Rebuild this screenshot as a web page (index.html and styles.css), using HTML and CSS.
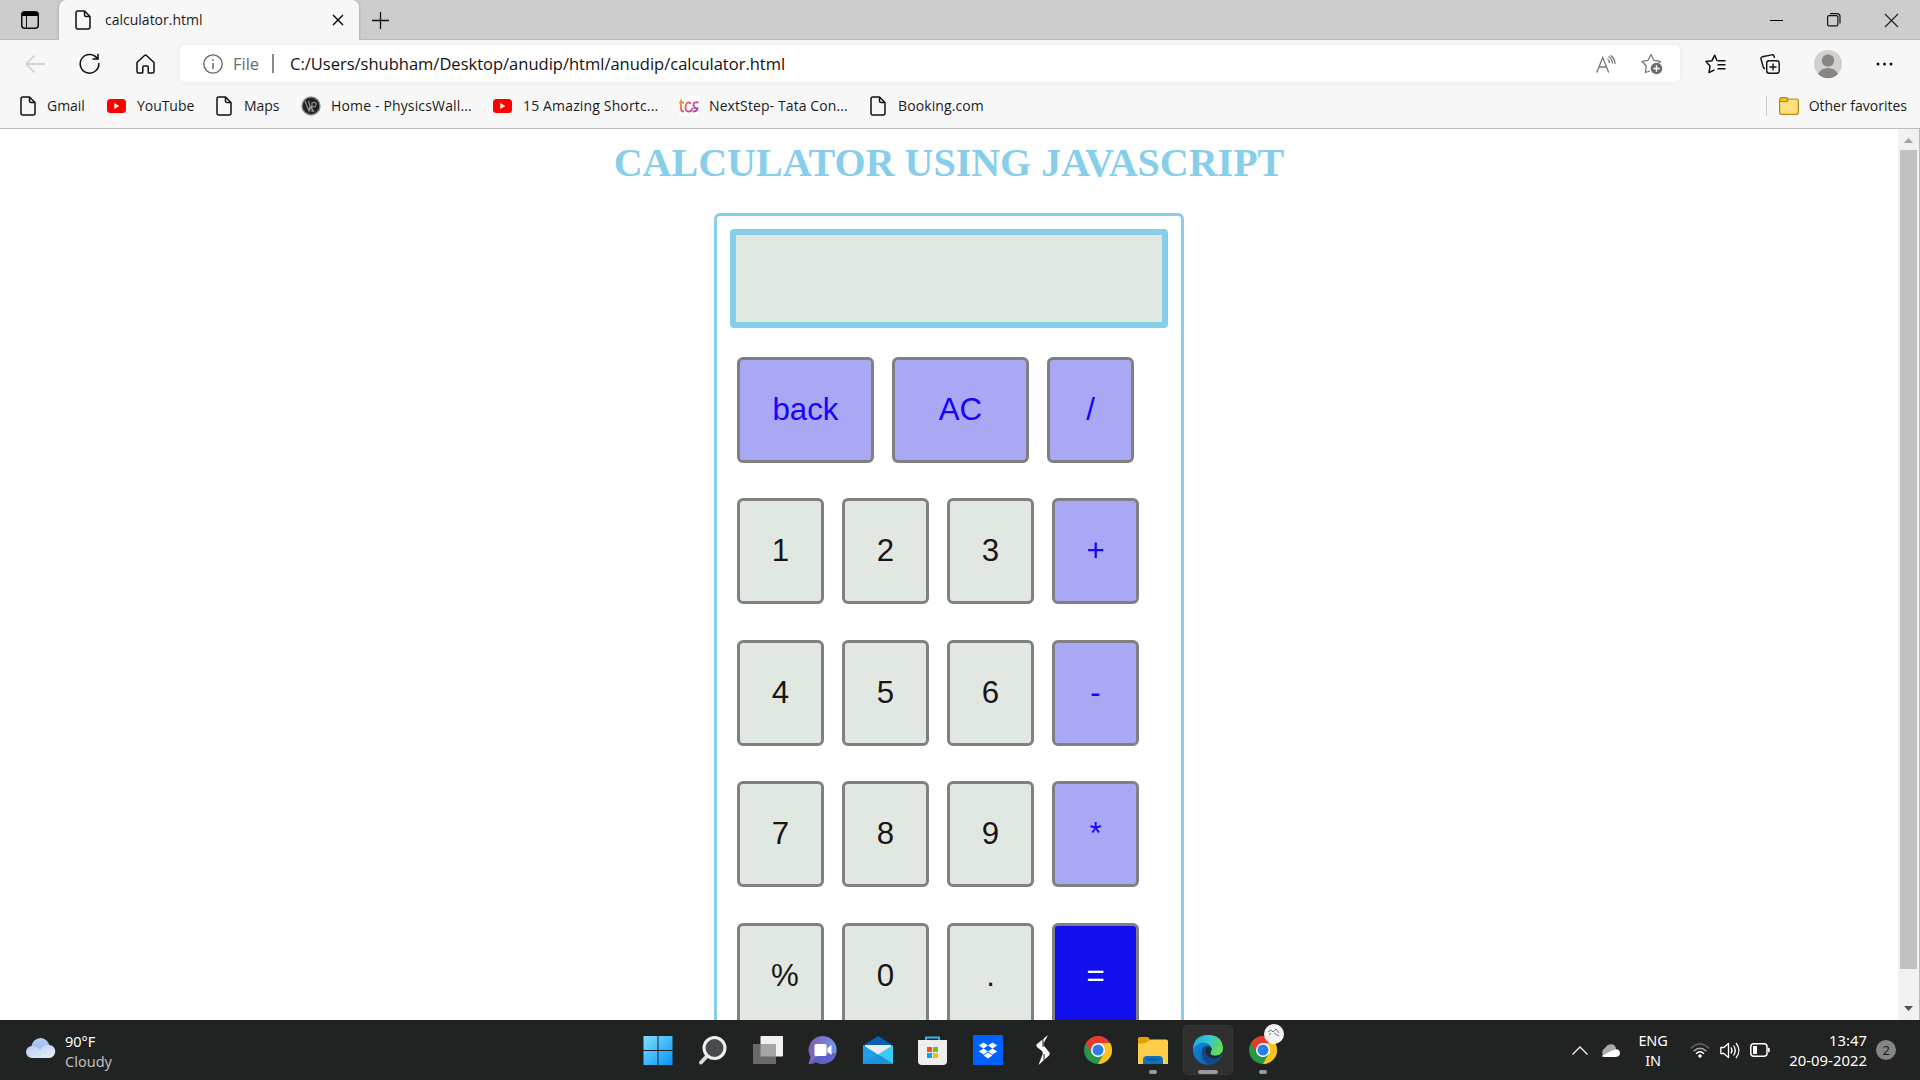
FILE: index.html
```html
<!DOCTYPE html>
<html lang="en">
<head>
<meta charset="utf-8">
<title>calculator.html</title>
<link rel="stylesheet" href="styles.css">
</head>
<body>
<svg class="defs" width="0" height="0" aria-hidden="true">
  <defs>
    <symbol id="page" viewBox="0 0 16 20"><path d="M3 1h6.500L15 6.500V17q0 2-2 2H3q-2 0-2-2V3q0-2 2-2zM9.500 1v4q0 1.500 1.500 1.500h4" fill="none" stroke="#111" stroke-width="1.500" stroke-linejoin="round"/></symbol>
    <symbol id="youtube" viewBox="0 0 19 14"><rect width="19" height="14" rx="3.500" fill="#f00"/><path d="M7.300 4v6l5-3z" fill="#fff"/></symbol>
    <symbol id="chrome" viewBox="0 0 28 28">
      <path d="M14 14L1.900 7A14 14 0 0 1 26.100 7z" fill="#e33b2e"/>
      <path d="M14 14L26.100 7A14 14 0 0 1 14 28z" fill="#fcc31e"/>
      <path d="M14 14L14 28A14 14 0 0 1 1.900 7z" fill="#269847"/>
      <path d="M14 7h12.100A14 14 0 0 1 14 28l6-10.500z" fill="#fcc31e"/>
      <path d="M8 17.500L1.900 7l6 3zM14 28l6-10.500-6 3z" fill="#269847"/>
      <path d="M14 7h12.100A14 14 0 0 0 1.900 7L8 17z" fill="#e33b2e"/>
      <circle cx="14" cy="14" r="7" fill="#fff"/><circle cx="14" cy="14" r="5.500" fill="#2d7de9"/>
    </symbol>
  </defs>
</svg>
<div class="screen">
  <header class="tabstrip">
    <svg class="tab-menu" width="18" height="18" viewBox="0 0 18 18"><rect x=".75" y=".75" width="16.500" height="16.500" rx="3" fill="none" stroke="#111" stroke-width="1.500"/><path d="M1 5V3q0-2 2-2h12q2 0 2 2v2z"/><path d="M5.500 5v12" stroke="#111"/></svg>
    <div class="tab">
      <svg width="16" height="20"><use href="#page"/></svg>
      <span class="tab-title">calculator.html</span>
      <svg class="tab-close" width="10" height="10" viewBox="0 0 10 10"><path d="M0 0l10 10M10 0L0 10" stroke="#111" stroke-width="1.500"/></svg>
    </div>
    <svg class="new-tab" width="17" height="17" viewBox="0 0 17 17"><path d="M8.500 0v17M0 8.500h17" stroke="#111" stroke-width="1.300"/></svg>
    <div class="window-controls">
      <svg width="13" height="13" viewBox="0 0 13 13"><path d="M0 6.500h13" stroke="#000"/></svg>
      <svg width="14" height="14" viewBox="0 0 14 14" fill="none" stroke="#111" stroke-width="1.200"><rect x=".6" y="2.600" width="10.300" height="10.300" rx="1.500"/><path d="M3 .6h7q3 0 3 3v7"/></svg>
      <svg width="13" height="13" viewBox="0 0 13 13"><path d="M0 0l13 13M13 0L0 13" stroke="#222" stroke-width="1.200"/></svg>
    </div>
  </header>
  <nav class="toolbar">
    <svg class="nav-back" width="20" height="18" viewBox="0 0 20 18" fill="none" stroke="#ccc" stroke-width="1.300"><path d="M20 9H1M9.500 .5L1 9l8.500 8.500"/></svg>
    <svg class="nav-reload" width="21" height="21" viewBox="0 0 21 21" fill="none" stroke="#111" stroke-width="1.500"><path d="M18.500 6A9.300 9.300 0 1 0 19.800 10M19 .8V6h-5.500"/></svg>
    <svg class="nav-home" width="19" height="20" viewBox="0 0 19 20" fill="none" stroke="#111" stroke-width="1.500" stroke-linejoin="round"><path d="M1 8.500L8.500 1.500q1-.8 2 0L18 8.500V17.500q0 1.500-1.500 1.500H13q-.8 0-.8-.8V13q0-1-1-1H7.800q-1 0-1 1v5.200q0 .8-.8.800H2.500Q1 19 1 17.500z"/></svg>
    <div class="address">
      <svg width="20" height="20" viewBox="0 0 20 20" fill="none" stroke="#666" stroke-width="1.300"><circle cx="10" cy="10" r="9.200"/><path d="M10 9v6M10 5.300v1.700" stroke-width="1.500"/></svg>
      <span class="scheme">File</span>
      <span class="divider"></span>
      <span class="url">C:/Users/shubham/Desktop/anudip/html/anudip/calculator.html</span>
      <svg class="read-aloud" width="20" height="18" viewBox="0 0 20 18" fill="none" stroke="#777" stroke-width="1.300"><path d="M.8 17.500L6.700 2.500l6 15M3 12h7.500M11.500 4q2 1.500 2 4M12.500 1.500q4 2.500 4 7M14.500 .4Q19 3.500 19 9"/></svg>
      <svg class="add-favorite" width="22" height="22" viewBox="0 0 22 22"><path d="M9 18l-4.500 1.500 .7-6.500L1 8.300l6-1L10 1.500l2.800 5.800 6.700 1-2 2" fill="none" stroke="#777" stroke-width="1.300" stroke-linejoin="round"/><circle cx="15.500" cy="15.500" r="5.800" fill="#6d6d6d"/><path d="M15.500 12.300v6.400M12.300 15.500h6.400" stroke="#fff" stroke-width="1.400"/></svg>
    </div>
    <div class="toolbar-actions">
      <svg width="21" height="20" viewBox="0 0 21 20" fill="none" stroke="#111" stroke-width="1.500" stroke-linejoin="round"><path d="M12 6.700L9.700 1.200 7 6.700 1 7.500l4 4.500-1 6.500 5.500-2.700M12.500 6.800H20.500M12.500 10.800h8M12.500 14.800h8"/></svg>
      <svg width="20" height="20" viewBox="0 0 20 20" fill="none" stroke="#111" stroke-width="1.400"><rect x="6.700" y="6.700" width="12.500" height="12.500" rx="2.500"/><path d="M13 9.500v7M9.500 13h7M14.500 4l-.5-1.800q-.5-1.800-2.300-1.300L2.300 2.800Q.5 3.300 1 5l2.200 8q.4 1.500 1.800 1.800"/></svg>
      <svg width="28" height="28" viewBox="0 0 28 28"><circle cx="14" cy="14" r="14" fill="#d2d0ce"/><circle cx="14" cy="10.500" r="6.200" fill="#8a8583"/><path d="M4 24q3-6 10-6t10 6a14 14 0 0 1-20 0" fill="#8a8583"/></svg>
      <svg width="17" height="4" viewBox="0 0 17 4" fill="#111"><circle cx="2" cy="2" r="1.500"/><circle cx="8.500" cy="2" r="1.500"/><circle cx="15" cy="2" r="1.500"/></svg>
    </div>
  </nav>
  <nav class="bookmarks">
    <a class="bookmark gmail"><svg width="16" height="20"><use href="#page"/></svg><span>Gmail</span></a>
    <a class="bookmark youtube"><svg width="19" height="14"><use href="#youtube"/></svg><span>YouTube</span></a>
    <a class="bookmark maps"><svg width="16" height="20"><use href="#page"/></svg><span>Maps</span></a>
    <a class="bookmark physics"><svg width="20" height="20" viewBox="0 0 20 20"><circle cx="10" cy="10" r="9.700" fill="#8c8c8c"/><circle cx="10" cy="10" r="8.300" fill="#222"/><path d="M4 5l4 10 1-5-1.500-5M11 16V7q4-2 4 1.500t-4 2M8 15l2-4 3 5" fill="none" stroke="#999" stroke-width="1.100"/></svg><span>Home - PhysicsWall...</span></a>
    <a class="bookmark shortcuts"><svg width="19" height="14"><use href="#youtube"/></svg><span>15 Amazing Shortc...</span></a>
    <a class="bookmark tcs"><svg width="20" height="20" viewBox="0 0 20 20"><defs><linearGradient id="tcs-fill" gradientUnits="userSpaceOnUse" x1="2" y1="3" x2="18" y2="17"><stop stop-color="#f7a12b"/><stop offset=".5" stop-color="#e0447a"/><stop offset="1" stop-color="#8a4fb5"/></linearGradient></defs><path d="M0 0h20v20H0z" fill="#fff"/><path d="M2 3.500V13q0 2.500 3 2.500M0 6.500h5M12 7.500Q7.500 4.500 6.500 10.500t5 4.800L14 12M19.500 6.500Q14 5.500 14.500 9t4 3.500q0 3-5 3" fill="none" stroke="url(#tcs-fill)" stroke-width="1.800"/></svg><span>NextStep- Tata Con...</span></a>
    <a class="bookmark booking"><svg width="16" height="20"><use href="#page"/></svg><span>Booking.com</span></a>
    <div class="other-favorites">
      <svg width="20" height="18" viewBox="0 0 20 18" stroke="#b8890e" stroke-width="1.200"><path d="M.6 4V15q0 2.400 2.400 2.400h14q2.400 0 2.400-2.400V4.500Q19.400 2 17 2H8z" fill="#ffdf7e"/><path d="M.6 4.500V3Q.6 .6 3 .6h4q2 0 2 2t-2 2z" fill="#f5c518"/></svg>
      <span>Other favorites</span>
    </div>
  </nav>
  <div class="viewport">
    <main class="document">
      <h1>CALCULATOR USING JAVASCRIPT</h1>
      <section class="calculator">
        <div class="display"></div>
        <div class="keypad">
          <div class="key-row"><button class="key op wide">back</button><button class="key op wide">AC</button><button class="key op">/</button></div>
          <div class="key-row"><button class="key">1</button><button class="key">2</button><button class="key">3</button><button class="key op">+</button></div>
          <div class="key-row"><button class="key">4</button><button class="key">5</button><button class="key">6</button><button class="key op">-</button></div>
          <div class="key-row"><button class="key">7</button><button class="key">8</button><button class="key">9</button><button class="key op">*</button></div>
          <div class="key-row"><button class="key percent">%</button><button class="key">0</button><button class="key">.</button><button class="key equals">=</button></div>
        </div>
      </section>
    </main>
    <div class="scrollbar">
      <svg width="9" height="5" viewBox="0 0 9 5"><path d="M4.500 0L9 5H0z" fill="#a3a3a3"/></svg>
      <div class="thumb"></div>
      <svg width="9" height="5" viewBox="0 0 9 5"><path d="M0 0h9L4.500 5z" fill="#505050"/></svg>
    </div>
  </div>
  <footer class="taskbar">
    <div class="weather">
      <svg width="30" height="20" viewBox="0 0 30 20"><defs><linearGradient id="cloud-back" x2="0" y2="1"><stop stop-color="#b5ccf5"/><stop offset="1" stop-color="#8fb1ea"/></linearGradient><linearGradient id="cloud-front" x2="1" y2="1"><stop stop-color="#b4ccef"/><stop offset="1" stop-color="#e9eff8"/></linearGradient></defs><circle cx="14.500" cy="9" r="9" fill="url(#cloud-back)"/><path d="M6 20a6 6 0 0 1 0-12q5 0 8 4 3-5 8-5a6.500 6.500 0 0 1 1.500 13z" fill="url(#cloud-front)"/></svg>
      <div class="weather-text"><span>90°F</span><span class="condition">Cloudy</span></div>
    </div>
    <div class="apps">
      <div class="app"><svg width="30" height="30" viewBox="0 0 30 30"><defs><linearGradient id="win" x2="1" y2="1"><stop stop-color="#7fe0ff"/><stop offset="1" stop-color="#0793fb"/></linearGradient></defs><path d="M1.500 1h14v14h-14zM16.500 1h14v14h-14zM1.500 16h14v14h-14zM16.500 16h14v14h-14z" transform="translate(-1 0)" fill="url(#win)"/></svg></div>
      <div class="app"><svg width="30" height="30" viewBox="0 0 30 30"><path d="M10 20l-7 7.500" stroke="#d7dadb" stroke-width="4" stroke-linecap="round"/><circle cx="16.500" cy="13" r="10.500" fill="#484a4b" stroke="#eef0f1" stroke-width="3"/></svg></div>
      <div class="app"><svg width="30" height="30" viewBox="0 0 30 30"><rect x="7.500" y="1" width="22.500" height="20.500" rx="1" fill="#f1f1f1"/><rect x="0" y="9" width="23" height="20" rx="1" fill="#6a6a6a"/><path d="M7.500 9H23v12.500H7.500z" fill="#a5a5a5"/></svg></div>
      <div class="app"><svg width="30" height="30" viewBox="0 0 30 30"><defs><linearGradient id="chat" x1="0" y1="0" x2="1" y2=".2"><stop stop-color="#8556ad"/><stop offset="1" stop-color="#7197e6"/></linearGradient></defs><path d="M15 1A14 14 0 1 1 8 27.300Q5 29.500 .5 29L2.500 22A14 14 0 0 1 15 1z" fill="url(#chat)"/><path d="M4 26q9-9 24-8-3 11-15 11l-6-2q-3 2-6 2z" fill="#5558c9" opacity=".75"/><rect x="6.500" y="9" width="12" height="12" rx="1.500" fill="#fff"/><path d="M19.500 13l4-3v10l-4-3z" fill="#fff"/></svg></div>
      <div class="app"><svg width="30" height="30" viewBox="0 0 30 30"><path d="M0 10.500L15 1l15 9.500V24H0z" fill="#0860b5"/><path d="M2 10h26v9L15 21 2 16z" fill="#eceeef"/><path d="M0 10l30 19H0z" fill="#219de5"/><path d="M30 10v19L15 19.500z" fill="#38cdf7"/><path d="M15 19.500L30 29H0z" fill="#1b92e0"/></svg></div>
      <div class="app"><svg width="30" height="30" viewBox="0 0 30 30"><path d="M8 7V2.500h13V7" fill="none" stroke="#22bdf2" stroke-width="2"/><path d="M0 5h29v21q0 4-4 4H4q-4 0-4-4z" fill="#eee"/><path d="M9 12h5v5H9z" fill="#f1511b"/><path d="M15 12h5v5h-5z" fill="#80bc06"/><path d="M9 18h5v5H9z" fill="#00a5ef"/><path d="M15 18h5v5h-5z" fill="#fbbc09"/></svg></div>
      <div class="app"><svg width="30" height="30" viewBox="0 0 30 30"><path d="M0 0h30v30H0z" fill="#0061fe"/><path d="M10.500 7.500l4.500 3-4.500 3-4.700-3zM19.500 7.500l4.700 3-4.700 3-4.500-3zM10.500 13.500l4.500 3-4.500 3-4.700-3zM19.500 13.500l4.700 3-4.700 3-4.500-3zM15 17.500l4.500 3-4.500 3-4.500-3z" fill="#fff"/></svg></div>
      <div class="app"><svg width="30" height="30" viewBox="0 0 30 30"><path d="M20 0l-4.500 8.500q-.5 2 1 3l5 6q1 2-1 3.500L10.500 30l4-10.500q1-2-.5-3.500l-5-4q-1.500-2 0-3z" fill="#fff"/><path d="M15 3v9M16 19v7" fill="none" stroke="#212222"/></svg></div>
      <div class="app"><svg width="28" height="28"><use href="#chrome"/></svg></div>
      <div class="app running"><svg width="30" height="30" viewBox="0 0 30 30"><path d="M0 4q0-2 2-2h8l3 3.500V10H0z" fill="#dfa000"/><path d="M0 8.500q6 .5 9-1.500l4-2.500h15q2 0 2 2V29H0z" fill="#ffcd48"/><path d="M5 29v-4q0-4 4-4h12q4 0 4 4v4z" fill="#0f70bd"/><path d="M9 24.500h12" stroke="#084c87" stroke-width="1.300"/></svg></div>
      <div class="app running active"><svg width="30" height="30" viewBox="0 0 30 30"><defs><linearGradient id="edge-top" x2="1" y2=".3"><stop stop-color="#20a4dd"/><stop offset=".5" stop-color="#31c5d7"/><stop offset="1" stop-color="#62dc59"/></linearGradient><linearGradient id="edge-low" x2=".8" y2="1"><stop stop-color="#158fe0"/><stop offset="1" stop-color="#0c5da8"/></linearGradient></defs><circle cx="15" cy="15" r="15" fill="url(#edge-low)"/><path d="M0 14Q1 0 15 0t15 13q0 7.500-8 7.500-6 0-4.500-3.500Q20 10 13 8T0 14z" fill="url(#edge-top)"/><path d="M9 14q3-5 8-2.500 3 2 .5 6-1 3 4.500 4 4 0 7-1.500-4 9-13 10Q7 25 9 14z" fill="#114a8b"/><path d="M18.500 13q-1.500-2-4-1-3 2-2 6 1.500 4 8 5.500 5 0 8.500-3.500l1-4q-3 5-8 5-6-1-4.500-4 1.500-2 1-4z" fill="#202a30"/></svg></div>
      <div class="app running"><svg width="28" height="28"><use href="#chrome"/></svg><svg class="profile-badge" width="20" height="20" viewBox="0 0 20 20"><circle cx="10" cy="10" r="10" fill="#f4f4f4"/><path d="M4 8l3-2 2 2 3-3 3 4M5 11l2-2M10 9l5 3" fill="none" stroke="#777"/></svg></div>
    </div>
    <div class="tray">
      <svg class="chevron" width="16" height="9" viewBox="0 0 16 9"><path d="M.5 8.500L8 1l7.500 7.500" fill="none" stroke="#eee" stroke-width="1.400"/></svg>
      <svg class="onedrive" width="20" height="13" viewBox="0 0 20 13"><path d="M5 13a5 5 0 0 1 0-9Q8-1 13 .5q3 1.500 3 4.500a4 4 0 0 1 0 8z" fill="#aaa"/><path d="M1.500 12L11 7l7 4q-1 2-3 2H5q-2 0-3.500-1zM11 7q5-3 8 0 2 3-1 5z" fill="#fff"/></svg>
      <div class="language"><span>ENG</span><span>IN</span></div>
      <svg class="wifi" width="20" height="15" viewBox="0 0 20 15" fill="none" stroke-width="1.400"><path d="M.7 5.500q9.300-9 18.600 0" stroke="#666"/><path d="M3.500 8.300q6.500-6 13 0" stroke="#aaa"/><path d="M6 10.800q4-4 8 0" stroke="#fff"/><circle cx="10" cy="13" r="1.800" fill="#fff"/></svg>
      <svg class="volume" width="20" height="17" viewBox="0 0 20 17" fill="none" stroke="#fff" stroke-width="1.300" stroke-linejoin="round"><path d="M.8 5.500h3L8.500 1.500v14l-4.700-4h-3zM11 5.500q2 3 0 6M13.500 3.500q3.500 5 0 10M16 1q6 7.500 0 15"/></svg>
      <svg class="battery" width="20" height="14" viewBox="0 0 20 14"><rect x=".8" y=".8" width="16.200" height="12.400" rx="3" fill="none" stroke="#fff" stroke-width="1.500"/><rect x="3" y="3" width="4" height="8" fill="#fff"/><path d="M18 4.500q2 0 2 2.500t-2 2.500z" fill="#fff"/></svg>
      <div class="clock"><span>13:47</span><span>20-09-2022</span></div>
      <div class="notifications">2</div>
    </div>
  </footer>
</div>
</body>
</html>
```
FILE: styles.css
```css
* { box-sizing: border-box; }
body { margin: 0; overflow: hidden; font-family: "Open Sans", "Noto Sans", sans-serif; color: #1b1b1b; }
svg { display: block; flex: none; overflow: visible; }
.defs { position: absolute; }
span { white-space: nowrap; }
.screen { width: 1920px; height: 1080px; display: flex; flex-direction: column; background: #fff; }

/* Browser chrome */
.tabstrip { height: 40px; flex: none; display: flex; align-items: center; background: #cdcdcd; box-shadow: inset 0 -1px #bcbcbc; }
.tab-menu { margin-left: 21px; }
.tab { width: 300px; height: 40px; margin-left: 20px; padding: 0 16px; display: flex; align-items: center; background: #f7f7f7; border-radius: 7px 7px 0 0; box-shadow: 0 0 3px #999; clip-path: inset(0 -3px 0 -3px); }
.tab-title { margin-left: 14px; padding-bottom: 1px; font-size: 14px; }
.tab-close { margin-left: auto; }
.new-tab { margin-left: 13px; }
.window-controls { margin-left: auto; margin-right: 22px; display: flex; align-items: center; gap: 44px; }
.toolbar { height: 46px; flex: none; display: flex; align-items: center; padding: 1px 27px 0 25px; background: #f7f7f7; }
.nav-reload { margin-left: 34px; }
.nav-home { margin-left: 36px; }
.address { width: 1500px; height: 37px; margin-left: 25px; padding: 0 17px 0 23px; display: flex; align-items: center; background: #fff; border-radius: 5px; box-shadow: 0 0 4px #e6e6e6; }
.scheme { margin-left: 10px; width: 39px; font-size: 16.500px; color: #6b6b6b; }
.divider { width: 2px; height: 19px; background: #888; }
.url { margin-left: 16px; font-size: 16.500px; color: #111; }
.read-aloud { margin-left: auto; }
.add-favorite { margin-left: 25px; }
.toolbar-actions { margin-left: auto; display: flex; align-items: center; }
.toolbar-actions svg + svg { margin-left: 34px; }
.bookmarks { height: 43px; flex: none; display: flex; align-items: center; padding: 0 13px 3px 20px; background: #f7f7f7; border-bottom: 1px solid #bbb; font-size: 14px; }
.bookmark { display: flex; align-items: center; gap: 11px; letter-spacing: -.05px; }
.gmail { width: 87px; }
.youtube { width: 109px; }
.maps { width: 85px; gap: 12px; }
.physics { width: 192px; gap: 10px; letter-spacing: .15px; }
.shortcuts { width: 186px; letter-spacing: .15px; }
.tcs { width: 191px; gap: 10px; letter-spacing: .1px; }
.booking { gap: 12px; letter-spacing: .1px; }
.other-favorites { margin-left: auto; padding-left: 12px; height: 20px; border-left: 1px solid #ccc; display: flex; align-items: center; gap: 10px; }

/* Calculator page */
.viewport { height: 891px; flex: none; display: flex; overflow: hidden; }
.document { flex: 1; height: 891px; overflow: hidden; display: flex; flex-direction: column; align-items: center; }
h1 { margin: 11px 0 27px; height: 46px; font: bold 40px/46px "Liberation Serif", serif; color: skyblue; white-space: nowrap; }
.calculator { width: 470px; height: 870px; flex: none; padding: 13px; border: 3px solid skyblue; border-radius: 6px; }
.display { height: 99px; background: #e1e8e1; border: 6px solid skyblue; border-radius: 4px; }
.keypad { padding: 29px 7px 0; display: flex; flex-direction: column; gap: 35.400px; }
.key-row { display: flex; gap: 18px; }
.key { width: 87px; height: 106px; padding: 0; border: 3px solid gray; border-radius: 6px; background: #e1e8e1; color: #1c1414; font: 31.250px "Liberation Sans", sans-serif; text-align: center; }
.wide { width: 137px; }
.op { background: #a9a8f5; color: #1b00ff; }
.equals { background: #110fec; color: #fff; }
.percent { padding-left: 31px; text-align: left; }
.scrollbar { width: 22px; padding: 9px 2px; display: flex; flex-direction: column; align-items: center; background: #f1f1f1; border-right: 1px solid #bbb; }
.thumb { width: 17px; height: 819px; margin-top: 7px; margin-bottom: auto; background: #c1c1c1; }

/* Taskbar */
.taskbar { height: 60px; flex: none; display: flex; background: #212222; color: #fff; font-family: "Noto Sans", sans-serif; font-size: 15px; line-height: 20px; }
.weather { width: 633px; padding-left: 26px; display: flex; align-items: center; gap: 9px; }
.weather > svg { margin-top: -4px; }
.weather-text { padding-top: 1px; display: flex; flex-direction: column; font-size: 14.500px; }
.condition { color: #bdbdbd; }
.apps { display: flex; align-items: center; gap: 5px; }
.app { width: 50px; height: 50px; display: flex; align-items: center; justify-content: center; border-radius: 5px; position: relative; }
.running::after { content: ""; position: absolute; bottom: 1px; left: 21px; width: 8px; height: 4px; border-radius: 2px; background: #9a9a9a; }
.active { background: #303030; box-shadow: inset 0 0 0 1px #373737; }
.active::after { left: 15px; width: 20px; }
.profile-badge { position: absolute; left: 26px; top: -1px; }
.tray { margin-left: auto; padding-right: 24px; display: flex; align-items: center; font-size: 14.500px; letter-spacing: -.2px; }
.onedrive { margin-left: 12px; }
.language { width: 32px; margin-left: 17px; display: flex; flex-direction: column; align-items: center; }
.wifi { margin-left: 21px; }
.volume { margin-left: 10px; }
.battery { margin-left: 10px; }
.clock { width: 80px; margin-left: 17px; display: flex; flex-direction: column; align-items: flex-end; font-size: 14.800px; letter-spacing: .05px; }
.notifications { width: 20px; height: 20px; margin-left: 9px; border-radius: 50%; background: #858585; color: #1c1c1c; font-size: 13px; text-align: center; }
```
